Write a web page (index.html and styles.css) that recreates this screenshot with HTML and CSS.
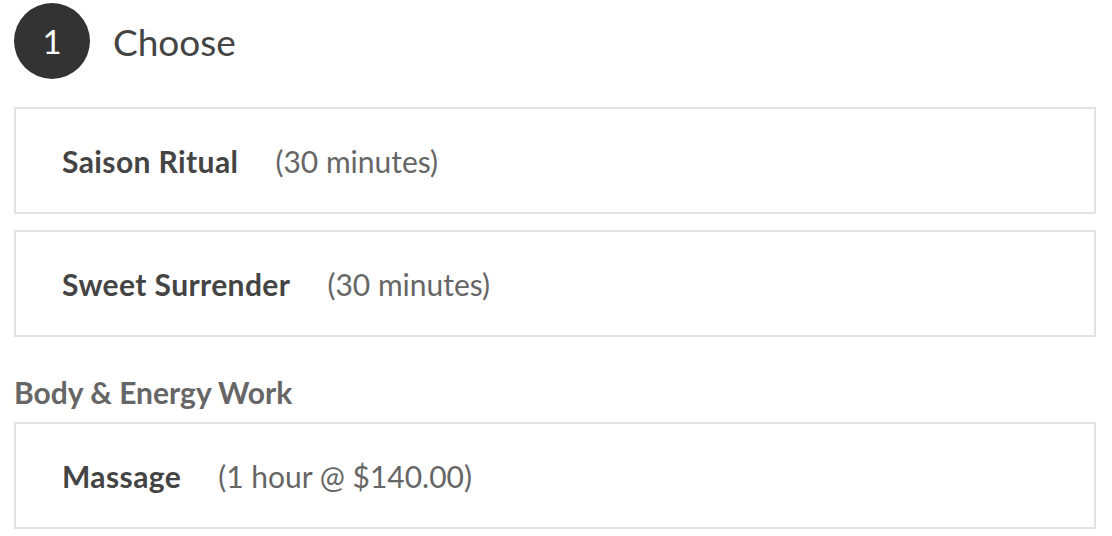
FILE: index.html
```html
<!DOCTYPE html>
<html>
<head>
<meta charset="utf-8">
<link rel="stylesheet" href="styles.css">
</head>
<body>
<div class="page">
  <div class="step">
    <div class="step-num">1</div>
    <h2 class="step-title">Choose</h2>
  </div>
  <div class="option"><span class="name">Saison Ritual</span><span class="detail">(30 minutes)</span></div>
  <div class="option"><span class="name">Sweet Surrender</span><span class="detail">(30 minutes)</span></div>
  <h3 class="category">Body &amp; Energy Work</h3>
  <div class="option"><span class="name">Massage</span><span class="detail">(1 hour @ $140.00)</span></div>
</div>
</body>
</html>
```

FILE: styles.css
```css
html, body { margin: 0; padding: 0; background: #fff; }
body { font-family: "Lato", "Open Sans", sans-serif; }
.page { padding: 3px 16px 0 14px; }
.step { display: flex; align-items: center; gap: 23px; height: 76px; margin-bottom: 28px; }
.step-num {
  width: 76px; height: 76px; border-radius: 50%;
  background: #333; color: #fff;
  display: flex; align-items: center; justify-content: center;
  font-size: 33px; font-weight: 400;
}
.step-title { margin: 0; font-size: 37px; font-weight: 400; color: #444; }
.option {
  border: 2px solid #e3e3e3;
  box-sizing: border-box; height: 107px;
  display: flex; align-items: center;
  padding: 0 0 0 46px;
  margin-bottom: 16px;
  font-size: 30px; color: #444;
}
.name { font-weight: 700; color: #444; letter-spacing: 0.4px; }
.detail { margin-left: 37px; color: #666; }
.category { margin: 37px 0 12px; font-size: 30px; font-weight: 700; color: #666; line-height: 36px; }
```
